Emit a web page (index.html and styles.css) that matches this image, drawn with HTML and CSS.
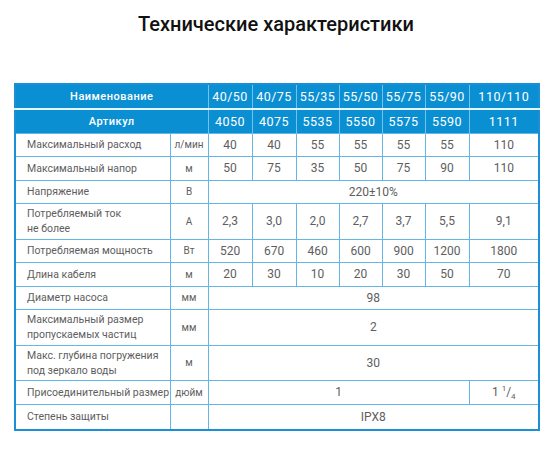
FILE: index.html
```html
<!DOCTYPE html>
<html lang="ru">
<head>
<meta charset="utf-8">
<title>Технические характеристики</title>
<link rel="stylesheet" href="styles.css">
</head>
<body>
<div class="page">
  <h1 class="title">Технические характеристики</h1>
  <table class="spec">
    <colgroup>
      <col class="c-name"><col class="c-unit">
      <col class="c-44"><col class="c-44"><col class="c-43"><col class="c-43"><col class="c-43"><col class="c-44"><col class="c-70">
    </colgroup>
    <thead>
      <tr class="h1">
        <th colspan="2" class="hname">Наименование</th>
        <th>40/50</th><th>40/75</th><th>55/35</th><th>55/50</th><th>55/75</th><th>55/90</th><th>110/110</th>
      </tr>
      <tr class="h2">
        <th colspan="2" class="hname">Артикул</th>
        <th>4050</th><th>4075</th><th>5535</th><th>5550</th><th>5575</th><th>5590</th><th>1111</th>
      </tr>
    </thead>
    <tbody>
      <tr class="r1">
        <td class="name">Максимальный расход</td><td class="unit">л/мин</td>
        <td>40</td><td>40</td><td>55</td><td>55</td><td>55</td><td>55</td><td>110</td>
      </tr>
      <tr class="r1">
        <td class="name">Максимальный напор</td><td class="unit">м</td>
        <td>50</td><td>75</td><td>35</td><td>50</td><td>75</td><td>90</td><td>110</td>
      </tr>
      <tr class="r1">
        <td class="name">Напряжение</td><td class="unit">В</td>
        <td colspan="7">220±10%</td>
      </tr>
      <tr class="r2">
        <td class="name">Потребляемый ток<br>не более</td><td class="unit">А</td>
        <td>2,3</td><td>3,0</td><td>2,0</td><td>2,7</td><td>3,7</td><td>5,5</td><td>9,1</td>
      </tr>
      <tr class="r1">
        <td class="name">Потребляемая мощность</td><td class="unit">Вт</td>
        <td>520</td><td>670</td><td>460</td><td>600</td><td>900</td><td>1200</td><td>1800</td>
      </tr>
      <tr class="r1">
        <td class="name">Длина кабеля</td><td class="unit">м</td>
        <td>20</td><td>30</td><td>10</td><td>20</td><td>30</td><td>50</td><td>70</td>
      </tr>
      <tr class="r1">
        <td class="name">Диаметр насоса</td><td class="unit">мм</td>
        <td colspan="7">98</td>
      </tr>
      <tr class="r2">
        <td class="name">Максимальный размер<br>пропускаемых частиц</td><td class="unit">мм</td>
        <td colspan="7">2</td>
      </tr>
      <tr class="r2">
        <td class="name">Макс. глубина погружения<br>под зеркало воды</td><td class="unit">м</td>
        <td colspan="7">30</td>
      </tr>
      <tr class="r1">
        <td class="name">Присоединительный размер</td><td class="unit">дюйм</td>
        <td colspan="6">1</td><td>1 <sup>1</sup>/<sub>4</sub></td>
      </tr>
      <tr class="r3">
        <td class="name">Степень защиты</td><td class="unit"></td>
        <td colspan="7">IPX8</td>
      </tr>
    </tbody>
  </table>
</div>
</body>
</html>
```

FILE: styles.css
```css
html, body {
  margin: 0;
  padding: 0;
  background: #ffffff;
}

body {
  font-family: Roboto, "Liberation Sans", sans-serif;
}

.page {
  padding: 0 16px 0 14px;
}

.title {
  margin: 0 0 45px 0;
  padding-top: 10px;
  line-height: 28px;
  font-size: 20px;
  font-weight: 500;
  color: #111111;
  text-align: center;
}

.spec {
  width: 524px;
  table-layout: fixed;
  border-collapse: collapse;
  border: 2px solid #1a8fd5;
}

.c-name { width: 155px; }
.c-unit { width: 38px; }
.c-44 { width: 44px; }
.c-43 { width: 43px; }
.c-70 { width: 70px; }

.spec th {
  background: #0b8fd3;
  color: #ffffff;
  font-size: 12.5px;
  font-weight: 400;
  letter-spacing: 0.5px;
  padding: 0;
  border-left: 1px solid #72c3ee;
  text-align: center;
  white-space: nowrap;
}

.spec th.hname {
  font-size: 11px;
  font-weight: 500;
  border-left: none;
}

.spec .h1 th {
  height: 23px;
  border-bottom: 2px solid #e6f4fc;
}

.spec .h2 th {
  height: 22.5px;
}

.spec td {
  padding: 0;
  border: 1px solid #63b6e6;
  font-size: 12px;
  color: #5e5e5e;
  text-align: center;
  white-space: nowrap;
}

.spec td.name {
  text-align: left;
  padding-left: 11px;
  font-size: 10.5px;
  line-height: 15px;
}

.spec td.unit {
  font-size: 10px;
}

.spec .r1 td { height: 22.5px; }
.spec .r2 td { height: 34.5px; }
.spec .r3 td { height: 24.5px; }

.spec sup,
.spec sub {
  font-size: 8px;
  line-height: 0;
}
```
